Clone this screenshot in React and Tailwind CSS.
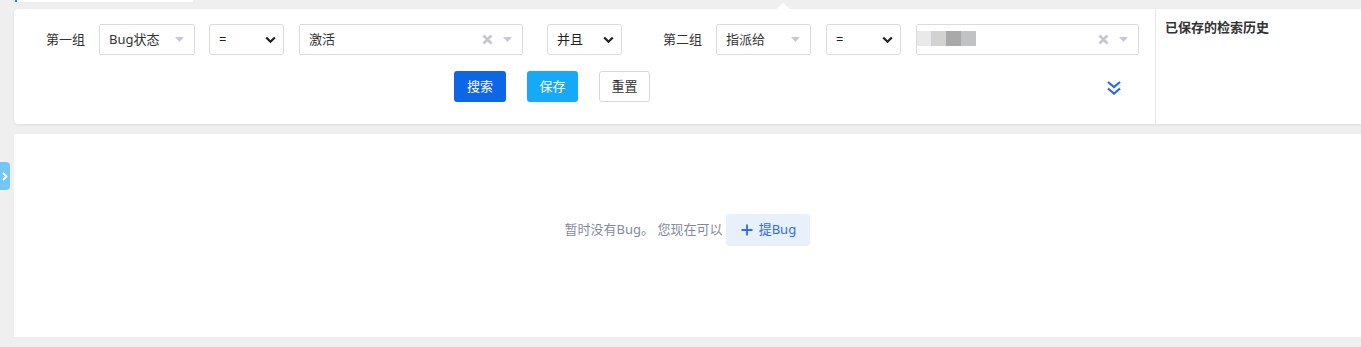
import React from 'react';

const FONT = { fontFamily: '"Noto Sans", "Noto Sans CJK SC", sans-serif' };

// small gray caret used by the picker-style fields
const Caret = () => (
    <svg width="9" height="5" viewBox="0 0 9 5" className="shrink-0">
        <path d="M0 0 L9 0 L4.5 5 Z" fill="#c6cad3" />
    </svg>
);

// bold chevron used by the native-looking selects
const Chevron = () => (
    <svg width="11" height="8" viewBox="0 0 11 8" className="shrink-0">
        <path d="M1.2 1.5 L5.5 5.8 L9.8 1.5" fill="none" stroke="#222" strokeWidth="2.2" />
    </svg>
);

const ClearX = () => (
    <svg width="11" height="11" viewBox="0 0 11 11" className="shrink-0">
        <path d="M1.5 1.5 L9.5 9.5 M9.5 1.5 L1.5 9.5" stroke="#c4c6ca" strokeWidth="2.6" />
    </svg>
);

const PickerField = ({ width, label }) => (
    <div className={`${width} h-[31px] flex items-center justify-between border border-[#dcdcdc] rounded-[2px] pl-[9px] pr-[10px] text-[13px] text-[#333]`}>
        <span>{label}</span>
        <Caret />
    </div>
);

const NativeSelect = ({ width, label }) => (
    <div className={`${width} h-[31px] flex items-center justify-between border border-[#dcdcdc] rounded-[3px] pl-[9px] pr-[7px] text-[13px] text-[#222]`}>
        <span>{label}</span>
        <Chevron />
    </div>
);

const GroupLabel = ({ children }) => (
    <span className="text-[13px] text-[#333] w-[39px] whitespace-nowrap">{children}</span>
);

export default function App() {
    return (
        <div className="relative w-[1361px] h-[347px] bg-[#efefef] overflow-hidden" style={FONT}>
            {/* top strip from the tab bar above */}
            <div className="ml-[15px] w-[178px] h-[2px] bg-white border-l-2 border-[#2f7df6]" />

            {/* search panel */}
            <div className="relative ml-[14px] mt-[7px] h-[115px] bg-white rounded-l-[4px] shadow-[0_1px_3px_rgba(0,0,0,0.08)] flex">
                {/* notch */}
                <div className="absolute -top-[6px] left-[762px] w-0 h-0 border-l-[7px] border-r-[7px] border-b-[6px] border-l-transparent border-r-transparent border-b-white" />

                <div className="w-[1141px] pt-[15px]">
                    <div className="flex items-center h-[31px]">
                        <div className="w-[32px]" />
                        <GroupLabel>第一组</GroupLabel>
                        <div className="w-[14px]" />
                        <PickerField width="w-[96px]" label="Bug状态" />
                        <div className="w-[14px]" />
                        <NativeSelect width="w-[75px]" label="=" />
                        <div className="w-[15px]" />
                        <div className="w-[224px] h-[31px] flex items-center border border-[#dcdcdc] rounded-[2px] pl-[9px] pr-[10px] text-[13px] text-[#333]">
                            <span className="flex-1">激活</span>
                            <ClearX />
                            <div className="w-[10px]" />
                            <Caret />
                        </div>
                        <div className="w-[24px]" />
                        <NativeSelect width="w-[75px]" label="并且" />
                        <div className="w-[41px]" />
                        <GroupLabel>第二组</GroupLabel>
                        <div className="w-[14px]" />
                        <PickerField width="w-[95px]" label="指派给" />
                        <div className="w-[15px]" />
                        <NativeSelect width="w-[75px]" label="=" />
                        <div className="w-[15px]" />
                        <div className="relative w-[223px] h-[31px] flex items-center border border-[#dcdcdc] rounded-[2px] pr-[10px] text-[13px] text-[#333]">
                            {/* blurred user name */}
                            <div className="flex h-[15px] self-start mt-[6px]">
                                <div className="w-[14px] bg-[#e9e8ea]" />
                                <div className="w-[15px] bg-[#d2d2d2]" />
                                <div className="w-[15px] bg-[#aaa9aa]" />
                                <div className="w-[15px] bg-[#c0c2c3]" />
                            </div>
                            <div className="flex-1" />
                            <ClearX />
                            <div className="w-[10px]" />
                            <Caret />
                        </div>
                    </div>

                    <div className="relative flex items-center mt-[16px] h-[31px]">
                        <div className="w-[440px]" />
                        <button className="w-[52px] h-[31px] rounded-[3px] bg-[#0c66e6] text-white text-[13px]">搜索</button>
                        <div className="w-[21px]" />
                        <button className="w-[51px] h-[31px] rounded-[3px] bg-[#16a9f8] text-white text-[13px]">保存</button>
                        <div className="w-[21px]" />
                        <button className="w-[51px] h-[31px] rounded-[3px] bg-white border border-[#d6d8e0] text-[#333] text-[13px]">重置</button>
                        <div className="flex-1" />
                        <svg width="16" height="16" viewBox="0 0 16 16" className="mr-[33px] mt-[2px]">
                            <path d="M2 2 L8 7 L14 2" fill="none" stroke="#2468f2" strokeWidth="2.2" />
                            <path d="M2 8.5 L8 13.5 L14 8.5" fill="none" stroke="#2468f2" strokeWidth="2.2" />
                        </svg>
                    </div>
                </div>

                <div className="flex-1 border-l border-[#e8e8e8] pl-[9px] pt-[5px]">
                    <span className="text-[13px] font-bold text-[#333]">已保存的检索历史</span>
                </div>
            </div>

            {/* list panel */}
            <div className="ml-[14px] mt-[10px] h-[203px] bg-white flex items-center justify-center pb-[11px]">
                <span className="text-[13px] text-[#838a9d]">暂时没有Bug。 您现在可以</span>
                <button className="ml-[4px] h-[32px] w-[84px] rounded-[4px] bg-[#e8f0fc] text-[#2e6cf4] text-[13px] flex items-center justify-center gap-[6px]">
                    <svg width="12" height="12" viewBox="0 0 12 12">
                        <path d="M6 0.5 V11.5 M0.5 6 H11.5" stroke="#2e6cf4" strokeWidth="1.8" />
                    </svg>
                    <span>提Bug</span>
                </button>
            </div>

            {/* sidebar toggle */}
            <div className="absolute left-0 top-[162px] w-[10px] h-[28px] rounded-r-[4px] bg-[#74c6f6] flex items-center justify-center">
                <svg width="6" height="9" viewBox="0 0 6 9">
                    <path d="M1 1 L4.5 4.5 L1 8" fill="none" stroke="white" strokeWidth="1.8" />
                </svg>
            </div>
        </div>
    );
}
